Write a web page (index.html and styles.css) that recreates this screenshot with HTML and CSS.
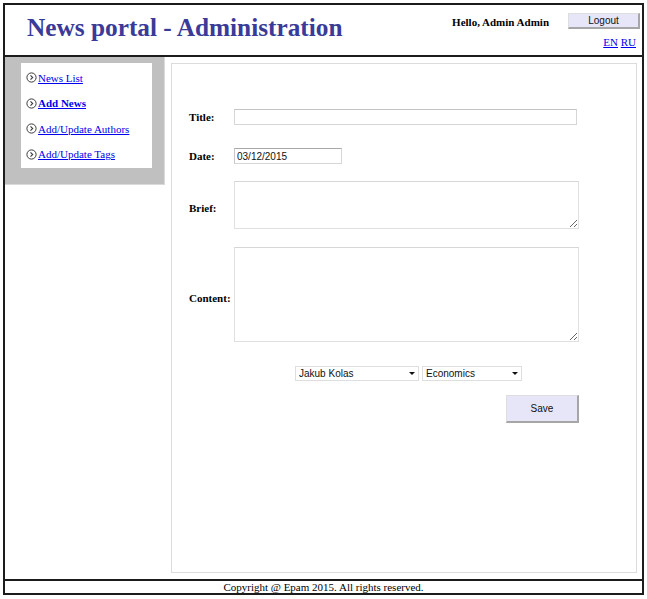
FILE: index.html
```html
<!DOCTYPE html>
<html lang="en">
<head>
<meta charset="utf-8">
<title>News portal - Administration</title>
<link rel="stylesheet" href="styles.css">
</head>
<body>
<div class="page">
  <header class="header">
    <h1 class="title">News portal - Administration</h1>
    <div class="user">
      <div class="user-row">
        <span class="hello">Hello, Admin Admin</span>
        <button class="btn btn-logout" type="button">Logout</button>
      </div>
      <div class="lang"><a href="#">EN</a> <a href="#">RU</a></div>
    </div>
  </header>
  <div class="main">
    <aside class="sidebar">
      <ul class="nav">
        <li class="nav-item"><svg class="nav-icon" viewBox="0 0 11 11" width="11" height="11"><circle cx="5.5" cy="5.5" r="4.6" fill="none" stroke="#3a3a3a" stroke-width="1"/><path d="M4.5 3.3 L6.7 5.5 L4.5 7.7" fill="none" stroke="#3a3a3a" stroke-width="1.1"/></svg><a href="#">News List</a></li>
        <li class="nav-item nav-item-active"><svg class="nav-icon" viewBox="0 0 11 11" width="11" height="11"><circle cx="5.5" cy="5.5" r="4.6" fill="none" stroke="#3a3a3a" stroke-width="1"/><path d="M4.5 3.3 L6.7 5.5 L4.5 7.7" fill="none" stroke="#3a3a3a" stroke-width="1.1"/></svg><a href="#">Add News</a></li>
        <li class="nav-item"><svg class="nav-icon" viewBox="0 0 11 11" width="11" height="11"><circle cx="5.5" cy="5.5" r="4.6" fill="none" stroke="#3a3a3a" stroke-width="1"/><path d="M4.5 3.3 L6.7 5.5 L4.5 7.7" fill="none" stroke="#3a3a3a" stroke-width="1.1"/></svg><a href="#">Add/Update Authors</a></li>
        <li class="nav-item"><svg class="nav-icon" viewBox="0 0 11 11" width="11" height="11"><circle cx="5.5" cy="5.5" r="4.6" fill="none" stroke="#3a3a3a" stroke-width="1"/><path d="M4.5 3.3 L6.7 5.5 L4.5 7.7" fill="none" stroke="#3a3a3a" stroke-width="1.1"/></svg><a href="#">Add/Update Tags</a></li>
      </ul>
    </aside>
    <section class="panel">
      <form class="form">
        <div class="row row-title">
          <label class="label">Title:</label>
          <input class="input input-title" type="text">
        </div>
        <div class="row row-date">
          <label class="label">Date:</label>
          <input class="input input-date" type="text" value="03/12/2015">
        </div>
        <div class="row row-brief">
          <label class="label">Brief:</label>
          <div class="field-area"><textarea class="area area-brief"></textarea></div>
        </div>
        <div class="row row-content">
          <label class="label">Content:</label>
          <div class="field-area"><textarea class="area area-content"></textarea></div>
        </div>
        <div class="selects">
          <span class="select-wrap select-author"><select class="select"><option>Jakub Kolas</option></select></span>
          <span class="select-wrap select-tag"><select class="select"><option>Economics</option></select></span>
        </div>
        <div class="actions">
          <button class="btn btn-save" type="button">Save</button>
        </div>
      </form>
    </section>
  </div>
  <footer class="footer">Copyright @ Epam 2015. All rights reserved.</footer>
</div>
</body>
</html>
```

FILE: styles.css
```css
* { box-sizing: border-box; }

body {
  margin: 3px;
  background: #fff;
  font-family: "Liberation Serif", "Times New Roman", serif;
  font-size: 11px;
  color: #000;
}

.page {
  width: 641px;
  height: 592px;
  border: 2px solid #1c1c1c;
  display: flex;
  flex-direction: column;
}

/* Header */
.header {
  height: 52px;
  flex: none;
  border-bottom: 2px solid #1c1c1c;
  display: flex;
  justify-content: space-between;
  align-items: flex-start;
}

.title {
  margin: 7px 0 0 22px;
  font-size: 25.3px;
  line-height: 30px;
  font-weight: bold;
  color: #3a3a98;
}

.user {
  padding: 8px 2px 0 0;
  display: flex;
  flex-direction: column;
  align-items: flex-end;
}

.user-row {
  display: flex;
  align-items: center;
  gap: 19px;
}

.hello {
  font-weight: bold;
  font-size: 11px;
  padding-top: 1px;
}

.lang {
  margin-top: 7px;
  padding-right: 4px;
  line-height: 13px;
}

a { color: #0000ee; }

/* Buttons */
.btn {
  font-family: "Liberation Sans", Arial, sans-serif;
  font-size: 10px;
  color: #111;
  background: #e6e6f8;
  border-style: solid;
  border-width: 1px 2px 2px 1px;
  border-color: #dedede #a6a6a6 #a6a6a6 #dedede;
  padding: 0;
  margin: 0;
}

.btn-logout {
  width: 72px;
  height: 16px;
}

.btn-save {
  width: 73px;
  height: 28px;
}

/* Main */
.main {
  flex: 1;
  display: flex;
  align-items: flex-start;
  min-height: 0;
}

.sidebar {
  width: 160px;
  flex: none;
  background: #c0c0c0;
  border-right: 1px solid #dadada;
  border-bottom: 1px solid #dadada;
  padding: 6px 12px 16px 16px;
}

.nav {
  list-style: none;
  margin: 0;
  background: #fff;
  padding: 2px 0 1px 5px;
  height: 105px;
}

.nav-item {
  height: 25.5px;
  display: flex;
  align-items: center;
  gap: 1px;
  font-size: 11px;
}

.nav-item-active a { font-weight: bold; }

.nav-icon {
  flex: none;
  display: block;
}

.panel {
  flex: 1;
  align-self: stretch;
  margin: 6px 5px 6px 6px;
  border: 1px solid #dcdcdc;
  padding: 45px 0 0 17px;
}

/* Form */
.row {
  display: flex;
  align-items: center;
}

.label {
  width: 45px;
  flex: none;
  font-weight: bold;
  font-size: 11px;
}

.row-title { margin-bottom: 23px; }
.row-date { margin-bottom: 17px; }
.row-brief { margin-bottom: 12px; }
.row-content { margin-bottom: 17px; }

.input {
  height: 16px;
  border: 1px solid #d6d6d6;
  border-top-color: #c4c4c4;
  padding: 0 2px;
  font-family: "Liberation Sans", Arial, sans-serif;
  font-size: 10px;
  color: #111;
  margin: 0;
  outline: none;
}

.input-title { width: 343px; }

.input-date {
  width: 108px;
  border-top-color: #a8a8a8;
  border-left-color: #c8c8c8;
}

.field-area { padding-bottom: 6px; }
.row-content .field-area { padding-bottom: 7px; }

.area {
  display: block;
  width: 345px;
  border: 1px solid #e0e0e0;
  border-top-color: #d6d6d6;
  margin: 0;
  padding: 2px;
  font-family: "Liberation Sans", Arial, sans-serif;
  font-size: 10px;
  outline: none;
}

.area-brief { height: 48px; }
.area-content { height: 95px; }

.selects {
  display: flex;
  gap: 3px;
  padding-left: 106px;
  margin-bottom: 14px;
}

.select-wrap {
  position: relative;
  display: block;
}

.select-wrap::after {
  content: "";
  position: absolute;
  right: 4px;
  top: 6px;
  border-left: 3px solid transparent;
  border-right: 3px solid transparent;
  border-top: 3px solid #111;
  pointer-events: none;
}

.select {
  -webkit-appearance: none;
  appearance: none;
  display: block;
  height: 15px;
  border: 1px solid #dedede;
  border-radius: 0;
  background: #fff;
  padding: 0 3px;
  margin: 0;
  font-family: "Liberation Sans", Arial, sans-serif;
  font-size: 10px;
  line-height: 13px;
  color: #111;
}

.select-author .select { width: 124px; }
.select-tag .select { width: 100px; }

.actions {
  width: 390px;
  display: flex;
  justify-content: flex-end;
}

/* Footer */
.footer {
  flex: none;
  height: 14px;
  border-top: 2px solid #1c1c1c;
  text-align: center;
  font-size: 11px;
  line-height: 13px;
}
```
